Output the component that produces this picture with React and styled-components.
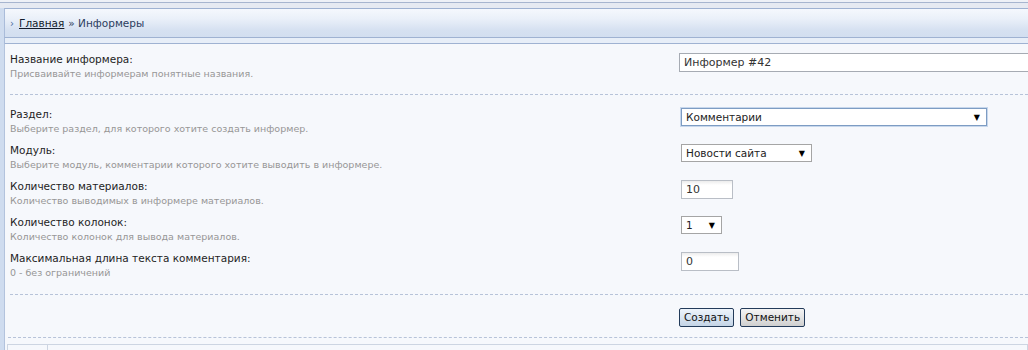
import React from "react";
import styled, { createGlobalStyle } from "styled-components";

const GlobalStyle = createGlobalStyle`
  html, body {
    margin: 0;
    padding: 0;
    background: #eef1f7;
    font-family: "DejaVu Sans", Tahoma, Verdana, sans-serif;
    font-size: 11px;
    color: #222;
    overflow: hidden;
  }
`;

const TopStrip = styled.div`
  margin-top: 2px;
  height: 6px;
  box-sizing: border-box;
  background: #e6eaf2;
  border-top: 1px solid #a7b5cf;
`;

const Frame = styled.div`
  padding-left: 4px;
  background: #cfdcef;
  min-height: 400px;
`;

const Breadcrumbs = styled.div`
  height: 30px;
  box-sizing: border-box;
  display: flex;
  align-items: center;
  padding-left: 5px;
  border-top: 1px solid #9fb2d2;
  border-left: 1px solid #aabcda;
  border-bottom: 1px solid #9fb2d2;
  background: linear-gradient(to bottom, #f5f8fd 0%, #eaf0f9 35%, #d6e1f1 75%, #d2def0 100%);
  color: #2c3d5e;
  font-size: 10.5px;
`;

const Chevron = styled.span`
  color: #4d6c9e;
  font-size: 10px;
  margin-right: 5px;
`;

const Crumb = styled.a`
  color: #141c2c;
  text-decoration: underline;
  margin-right: 4px;
`;

const Spacer = styled.div`
  height: 5px;
  background: #e7eef8;
  border-left: 1px solid #aabcda;
`;

const Panel = styled.div`
  background: #f6f8fc;
  border-top: 1px solid #9fb2d2;
  border-left: 1px solid #b3c3dd;
`;

const Section = styled.div`
  padding: ${(p) => p.$pad};
  border-bottom: 1px dashed #b7c3d9;
  margin-left: ${(p) => p.$indent || "5px"};
`;

const Row = styled.div`
  display: grid;
  grid-template-columns: 669px 1fr;
  align-items: start;
  height: 36px;
`;

const Info = styled.div`
  display: flex;
  flex-direction: column;
`;

const Label = styled.div`
  line-height: 16px;
  color: #1e1e1e;
  font-size: 10.5px;
`;

const Hint = styled.div`
  line-height: 14px;
  color: #969696;
  font-size: 9.5px;
`;

const Control = styled.div`
  padding-top: 2px;
  padding-left: ${(p) => p.$shift || "2px"};
  display: flex;
  gap: 6px;
`;

const TextInput = styled.div`
  box-sizing: border-box;
  width: ${(p) => p.$w};
  height: 19px;
  border: 1px solid ${(p) => (p.$soft ? "#b9bec6" : "#a6abb3")};
  background: ${(p) => (p.$soft ? "linear-gradient(to bottom, #ececec 0, #fff 4px)" : "#fff")};
  padding-left: 4px;
  line-height: 17px;
  font-size: 11px;
  color: #333;
`;

const Select = styled.div`
  box-sizing: border-box;
  width: ${(p) => p.$w};
  height: 18px;
  border: 1px solid ${(p) => (p.$focus ? "#7d9cc3" : "#a5a5a5")};
  box-shadow: ${(p) => (p.$focus ? "0 0 0 1px #c7d7ec" : "none")};
  background: #fff;
  display: flex;
  align-items: center;
  justify-content: space-between;
  padding: 0 6px 0 4px;
  font-size: 10.5px;
  color: #222;
`;

const Arrow = styled.span`
  font-size: 8px;
  color: #000;
`;

const Button = styled.button`
  box-sizing: border-box;
  height: 19px;
  padding: 0 4px;
  border: 1px solid #233b5a;
  border-radius: 2px;
  background: ${(p) =>
    p.$primary
      ? "linear-gradient(to bottom, #eef4fb 0%, #d9e5f2 50%, #c4d4e6 100%)"
      : "linear-gradient(to bottom, #f4f4f4 0%, #e4e4e4 50%, #cfcfcf 100%)"};
  font-family: "DejaVu Sans", Tahoma, sans-serif;
  font-size: 10.5px;
  color: #111;
  line-height: 17px;
`;

const Grid = styled.div`
  margin-top: 6px;
  margin-left: 2px;
  display: grid;
  grid-template-columns: 40px 1fr;
  border-top: 1px solid #cdd5e2;
  border-left: 1px solid #cdd5e2;
  height: 12px;
`;

const Cell = styled.div`
  border-right: 1px solid #cdd5e2;
`;

const fields = [
  {
    label: "Раздел:",
    hint: "Выберите раздел, для которого хотите создать информер.",
    control: (
      <Select $w="306px" $focus>
        Комментарии<Arrow>▼</Arrow>
      </Select>
    ),
  },
  {
    label: "Модуль:",
    hint: "Выберите модуль, комментарии которого хотите выводить в информере.",
    control: (
      <Select $w="131px">
        Новости сайта<Arrow>▼</Arrow>
      </Select>
    ),
  },
  {
    label: "Количество материалов:",
    hint: "Количество выводимых в информере материалов.",
    control: (
      <TextInput $w="52px" $soft>
        10
      </TextInput>
    ),
  },
  {
    label: "Количество колонок:",
    hint: "Количество колонок для вывода материалов.",
    control: (
      <Select $w="41px">
        1<Arrow>▼</Arrow>
      </Select>
    ),
  },
  {
    label: "Максимальная длина текста комментария:",
    hint: "0 - без ограничений",
    control: (
      <TextInput $w="58px" $soft>
        0
      </TextInput>
    ),
  },
];

const App = () => {
  return (
    <>
      <GlobalStyle />
      <TopStrip />
      <Frame>
        <Breadcrumbs>
          <Chevron>›</Chevron>
          <Crumb>Главная</Crumb>» Информеры
        </Breadcrumbs>
        <Spacer />
        <Panel>
          <Section $pad="7px 0 7px 0">
            <Row>
              <Info>
                <Label>Название информера:</Label>
                <Hint>Присваивайте информерам понятные названия.</Hint>
              </Info>
              <Control $shift="0">
                <TextInput $w="360px">Информер #42</TextInput>
              </Control>
            </Row>
          </Section>
          <Section $pad="11px 0 8px 0">
            {fields.map((f) => (
              <Row key={f.label}>
                <Info>
                  <Label>{f.label}</Label>
                  <Hint>{f.hint}</Hint>
                </Info>
                <Control>{f.control}</Control>
              </Row>
            ))}
          </Section>
          <Section $pad="11px 0 10px 669px" $indent="3px">
            <Control $shift="2px">
              <Button $primary>Создать</Button>
              <Button>Отменить</Button>
            </Control>
          </Section>
          <Grid>
            <Cell />
            <Cell />
          </Grid>
        </Panel>
      </Frame>
    </>
  );
};

export default App;
